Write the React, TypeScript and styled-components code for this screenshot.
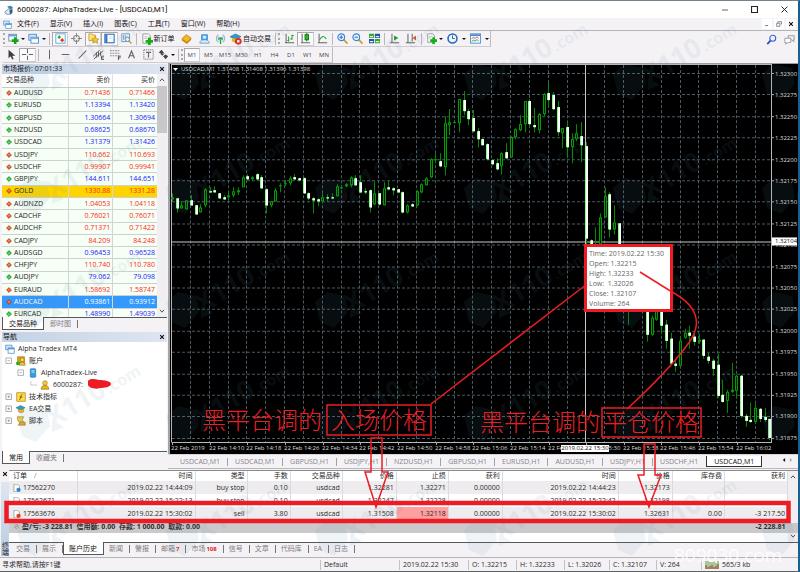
import React from "react";
import styled, { createGlobalStyle, css } from "styled-components";

const UI_FONT = `"Open Sans", "Noto Sans CJK SC", sans-serif`;
const RED = "#ed1c24";

const GlobalStyle = createGlobalStyle`
  *, *::before, *::after { box-sizing: border-box; }
  body { margin: 0; background: #f5f2f6; font-family: ${UI_FONT}; font-size: 7px; line-height: 12px; color: #2b2b2b; }
  button { appearance: none; border: 0; margin: 0; padding: 0; background: none; font: inherit; color: inherit; white-space: nowrap; }
  svg { display: block; flex: none; }
  table { border-collapse: collapse; }
`;

/* ---------- window frame ---------- */

const Window = styled.div`
  position: relative;
  display: flex;
  flex-direction: column;
  min-height: 100vh;
  overflow: hidden;
  border-top: 1px solid #74808c;
  border-right: 2px solid #17608f;
  border-bottom: 1px solid #5d6468;
`;

const TitleBar = styled.header`
  display: flex;
  align-items: center;
  gap: 3px;
  height: 17px;
  padding-left: 4px;
  background: #fff;
`;

const WindowTitle = styled.h1`
  flex: 1;
  margin: 0;
  font-family: Roboto, ${UI_FONT};
  font-size: 8px;
  font-weight: 400;
  color: #111;
`;

const CaptionButton = styled.button`
  display: grid;
  place-items: center;
  width: 27px;
  height: 17px;
`;

const MenuBar = styled.nav`
  display: flex;
  align-items: center;
  height: 13px;
  padding-left: 3px;
  border-bottom: 1px solid #b5b5b8;
`;

const MenuItem = styled.button`
  padding: 0 6px 0 5px;
  color: #111;
`;

const Spacer = styled.div`
  flex: 1;
`;

const ChildButton = styled.button`
  display: grid;
  place-items: center;
  width: 10px;
  height: 10px;
  margin-right: 2px;
  background: #fff;
`;

/* ---------- tool bars ---------- */

const ToolRow = styled.div`
  display: flex;
  align-items: center;
  height: 16px;
  padding-left: 3px;
`;

const ToolGroup = styled.div`
  display: flex;
  align-items: center;
  height: 16px;
  border-right: 1px solid #bdbac0;
  border-bottom: 1px solid #cfccd2;
`;

const ToolButton = styled.button<{ $w: number; $on?: boolean }>`
  display: flex;
  align-items: center;
  justify-content: center;
  width: ${(p) => p.$w}px;
  height: 14px;
  ${(p) =>
    p.$on &&
    css`
      background: #fbfafc;
      border: 1px solid #cfcdd2;
      border-top-color: #a9a7ac;
      border-left-color: #a9a7ac;
    `}
`;

const ToolLabel = styled.span`
  margin-left: 1px;
  color: #111;
`;

const Caret = styled.i`
  width: 0;
  height: 0;
  margin: 0 1px;
  border: 2px solid transparent;
  border-top-color: #111;
  border-bottom: 0;
`;

const Divider = styled.i`
  width: 1px;
  height: 12px;
  margin: 0 2px;
  background: #b9b6bc;
`;

const Handle = styled.i`
  width: 2px;
  height: 11px;
  margin-right: 1px;
  border-left: 2px dotted #aaa7ae;
`;

const Period = styled(ToolButton)`
  font-size: 6px;
  color: #444;
`;

/* ---------- work area ---------- */

const Work = styled.main`
  display: flex;
  height: 406px;
`;

const Side = styled.aside`
  display: flex;
  flex-direction: column;
  width: 168px;
  padding: 1px 1px 3px 2px;
`;

const PaneHeader = styled.div`
  display: flex;
  align-items: center;
  justify-content: space-between;
  height: 10px;
  padding: 0 2px 0 1px;
  background: linear-gradient(90deg, #c3d2e4, #dfe5f1);
  color: #111;
`;

const PaneClose = styled.button`
  display: grid;
  place-items: center;
  width: 7px;
  height: 8px;
`;

const QuoteBox = styled.div`
  display: flex;
  height: 243px;
  overflow: hidden;
  background: #fff;
`;

const QuoteTable = styled.table`
  flex: 1;
  height: 247px;
  table-layout: fixed;
  line-height: 8px;
  th, td { padding: 0 2px; text-align: right; font-weight: 400; border-right: 1px solid #d3d6d2; }
  th:first-child, td:first-child { padding-left: 4px; text-align: left; width: 66px; }
  th { height: 13px; background: #fff; border-right-color: #e2e2e2; border-bottom: 1px solid #c9c9c9; }
  th:last-child, td:last-child { border-right: 0; }
`;

const QuoteRow = styled.tr<{ $tone: string; $state?: string }>`
  background: ${(p) => (p.$state === "gold" ? "#ffd500" : p.$state === "selected" ? "#3399ff" : "#f6fff5")};
  border-bottom: 1px solid #cdd3cc;
  td { color: ${(p) => (p.$state === "selected" ? "#fff" : p.$tone === "up" ? "#1a1aff" : "#fb2a1a")}; }
  td:first-child { color: ${(p) => (p.$state === "selected" ? "#fff" : "#222")}; }
`;

const SymbolName = styled.span`
  display: flex;
  align-items: center;
  gap: 2px;
`;

const ScrollBar = styled.div`
  display: flex;
  flex-direction: column;
  align-items: center;
  justify-content: space-between;
  width: 10px;
  padding: 3px 0;
  background: #f1eff2;
`;

const Thumb = styled.i<{ $h: number }>`
  width: 100%;
  height: ${(p) => p.$h}px;
  margin-top: 3px;
  background: #c9c7ca;
`;

const PaneTabs = styled.div`
  display: flex;
  height: 15px;
  border-top: 1px solid #55575a;
`;

const PaneTab = styled.button<{ $on?: boolean }>`
  padding: 0 6px;
  line-height: 11px;
  color: ${(p) => (p.$on ? "#111" : "#7d7b80")};
  ${(p) =>
    p.$on
      ? css`
          height: 13px;
          margin-top: -1px;
          background: #fff;
          border: 1px solid #55575a;
          border-top: 0;
        `
      : css`
          height: 8px;
          margin-top: 2px;
          line-height: 8px;
          border-right: 1px solid #77757a;
        `}
`;

const TreeBox = styled.div`
  flex: 1;
  background: #fff;
`;

const Tree = styled.ul`
  display: grid;
  grid-auto-rows: 1fr;
  height: 83px;
  margin: 0;
  padding: 1px 0 0 3px;
  list-style: none;
`;

const TreeItem = styled.li<{ $depth: number }>`
  display: flex;
  align-items: center;
  gap: 3px;
  padding-left: ${(p) => p.$depth * 12}px;
`;

/* ---------- chart window ---------- */

const ChartPane = styled.section`
  display: flex;
  flex: 1;
  flex-direction: column;
  min-width: 0;
`;

const ChartFrame = styled.div`
  flex: 1;
  min-height: 0;
  background: #000;
  border-top: 1px solid #9c9ca0;
  border-left: 2px solid #a5a3a8;
  svg { width: 100%; height: 100%; }
`;

const ChartTabs = styled.div`
  display: flex;
  align-items: flex-start;
  height: 15px;
  padding: 1px 4px 0 5px;
  border-top: 1px solid #d8d5da;
  border-bottom: 1px solid #b9b7bb;
`;

const ChartTab = styled.button<{ $on?: boolean }>`
  flex: 0 1 auto;
  padding: 0 7px;
  line-height: 11px;
  color: ${(p) => (p.$on ? "#111" : "#86848a")};
  ${(p) =>
    p.$on
      ? css`
          height: 11px;
          line-height: 9px;
          background: #fff;
          border: 1px solid #333;
          border-top: 0;
        `
      : css`
          height: 8px;
          margin-top: 2px;
          line-height: 8px;
          border-right: 1px solid #a4a2a7;
          &:nth-last-of-type(4) { border-right-color: transparent; }
        `}
`;

/* ---------- terminal ---------- */

const Terminal = styled.section`
  display: flex;
  height: 88px;
`;

const TerminalRail = styled.div`
  display: flex;
  flex-direction: column;
  align-items: center;
  justify-content: space-between;
  width: 9px;
  padding: 1px 1px;
`;

const RailLabel = styled.span`
  flex: 1;
  width: 8px;
  margin-top: 4px;
  background: linear-gradient(#dfe6f2, #b9cbe0);
  writing-mode: vertical-rl;
  text-align: right;
  line-height: 8px;
`;

const TerminalBody = styled.div`
  display: flex;
  flex: 1;
  flex-direction: column;
  min-width: 0;
  border-top: 1px solid #8b8b8e;
  margin-top: 1px;
`;

const OrdersArea = styled.div`
  display: flex;
  flex: 1;
  background: #fff;
`;

const OrderScroll = styled.div`
  flex: 1;
  min-width: 0;
`;

const OrderTable = styled.table`
  width: 100%;
  height: 62px;
  table-layout: fixed;
  line-height: 10px;
  th, td { padding: 0 2px; text-align: right; font-weight: 400; white-space: nowrap; border-right: 1px solid #dcdadd; }
  th:first-child, td:first-child { padding-left: 4px; text-align: left; }
`;

const SortMark = styled.span`
  margin-left: 7px;
  color: #888;
`;

const OrderRow = styled.tr<{ $shade?: boolean }>`
  background: ${(p) => (p.$shade ? "#efecef" : "#fff")};
`;

const BalanceRow = styled.tr`
  background: #cbc9cb;
  td { border-right: 0; font-weight: 700; }
`;

const StopCell = styled.td<{ $hit?: boolean }>`
  background: ${(p) => (p.$hit ? "#ff9f9f" : "transparent")};
`;

const TerminalTabs = styled(PaneTabs)`
  padding-left: 2px;
`;

const TerminalTab = styled(PaneTab)`
  padding: 0 6px 0 5px;
  em { margin-left: 1px; font-size: 6px; font-style: normal; font-weight: 700; color: #e8202a; }
`;

const StatusBar = styled.footer`
  display: flex;
  align-items: center;
  flex: 1;
  min-height: 14px;
  border-top: 1px solid #b5b3b7;
`;

const StatusCell = styled.span<{ $w?: number }>`
  display: flex;
  align-items: center;
  gap: 3px;
  flex: ${(p) => (p.$w ? `0 0 ${p.$w}px` : "1")};
  height: 10px;
  padding-left: ${(p) => (p.$w ? 3 : 2)}px;
  border-left: ${(p) => (p.$w ? "1px solid #c4c1c6" : "0")};
`;

const Overlay = styled.svg`
  position: absolute;
  inset: -1px -2px -1px 0;
  width: calc(100% + 2px);
  height: calc(100% + 2px);
  pointer-events: none;
`;

/* ---------- icons ---------- */

const shapes: Record<string, React.ReactNode> = {
  app: (
    <>
      <path d="M4 2 9 1l3 3-4 2z" fill="#3c84ad" />
      <path d="M1 9 6 5l4 2-1 5H3z" fill="#dfe9ef" stroke="#356a88" strokeWidth=".8" />
      <path d="M7 7l4-2v5l-3 2z" fill="#2a5f80" />
    </>
  ),
  windows: (
    <>
      <rect x="1" y="1.5" width="8" height="6" fill="#d6e8fa" stroke="#4a8fd0" />
      <rect x="4" y="5" width="8" height="7" fill="#fff" stroke="#4a8fd0" />
      <path d="M4 6.2h8" stroke="#4a8fd0" strokeWidth="1.6" />
    </>
  ),
  newChart: (
    <>
      <rect x="1" y="1.5" width="9" height="8" fill="#f5fbff" stroke="#5a86b5" />
      <path d="M1 3h9" stroke="#6aa0d8" strokeWidth="2" />
      <path d="M8.500 5v8M4.500 9h8" stroke="#12a812" strokeWidth="3" />
    </>
  ),
  profiles: (
    <>
      <rect x="1" y="1.500" width="9" height="7" fill="#d3e7fb" stroke="#4387c7" />
      <rect x="3.500" y="5" width="9" height="7" fill="#fff" stroke="#4387c7" />
      <path d="M4 6.500h8" stroke="#6bb0f0" strokeWidth="1.500" />
    </>
  ),
  watch: (
    <>
      <rect x="1" y="1" width="11" height="11" fill="#fff" stroke="#4aa3df" />
      <path d="M3 5l2-2.500L7 5 5 7z" fill="#1cb01c" />
      <path d="M6 8.500 8.500 6 11 8.500 8.500 11z" fill="#e23b1d" />
    </>
  ),
  target: (
    <g fill="none" stroke="#888" strokeWidth="1.200">
      <circle cx="6.500" cy="6.500" r="3.500" />
      <path d="M6.500 0v5M6.500 8v5M0 6.500h5M8 6.500h5" />
    </g>
  ),
  favorites: (
    <>
      <path d="M1 1h4l1 1.500h3V9H1z" fill="#ffe27a" stroke="#b98a1b" strokeWidth=".8" />
      <path d="m8.500 4 1.300 2.700 3 .4-2.200 2 .6 3-2.700-1.500L5.900 12l.5-2.900-2.100-2 3-.4z" fill="#ffd21c" stroke="#a87c10" strokeWidth=".7" />
    </>
  ),
  panel: (
    <>
      <rect x="1" y="1.500" width="11" height="10" fill="#fff" stroke="#2f74ba" strokeWidth="1.300" />
      <path d="M1.500 2v9.500h2.500V2z" fill="#2f74ba" />
      <path d="M6 4.500h4M6 6.500h4" stroke="#b5cce4" strokeWidth=".7" />
    </>
  ),
  tester: (
    <>
      <rect x="1" y="1" width="9" height="9" fill="#eef5fc" stroke="#6c94bb" />
      <path d="M3 3v5M5 2v4M7 4v4" stroke="#6c94bb" />
      <circle cx="7.500" cy="7.500" r="2.600" fill="#e3f3ff" stroke="#6b8aa5" />
      <path d="m9.500 9.500 3 3" stroke="#c69a3a" strokeWidth="1.700" />
    </>
  ),
  order: (
    <>
      <path d="M2 1h6l2 2v8H2z" fill="#fff" stroke="#888" strokeWidth=".9" />
      <path d="M3.500 4h4M3.500 6h3" stroke="#999" strokeWidth=".7" />
      <path d="M9 5v8M5 9h8" stroke="#10b010" strokeWidth="3" />
    </>
  ),
  book: (
    <>
      <path d="m1 7 5-5 6 4-5 5z" fill="#f5b719" stroke="#a8720a" strokeWidth=".8" />
      <path d="M1 7v2l6 4 5-5V6l-5 5z" fill="#c98611" />
    </>
  ),
  person: (
    <>
      <path d="M3 2h7v6H3z" fill="#5bb4f5" stroke="#2b7cc0" strokeWidth=".8" />
      <path d="M5 3.500h3v3H5z" fill="#e6f5ff" />
      <path d="M1 12c0-3 2-4 5.500-4s5.500 1 5.500 4z" fill="#dcebf7" stroke="#3b86c3" strokeWidth=".8" />
    </>
  ),
  signal: (
    <g fill="none">
      <path d="M4 2a5.500 5.500 0 0 0 0 9M9 2a5.500 5.500 0 0 1 0 9" stroke="#9ab6cb" strokeWidth="1.400" />
      <path d="M5 4.500a3 3 0 0 0 0 4M8 4.500a3 3 0 0 1 0 4" stroke="#4aa0d0" strokeWidth="1.200" />
      <circle cx="6.500" cy="6.500" r="1.600" fill="#17b217" />
      <path d="M6.500 8v5" stroke="#17b217" strokeWidth="1.600" />
    </g>
  ),
  expert: (
    <>
      <path d="m0 4 6-3 6 3-6 3z" fill="#2e9ad2" stroke="#1b648f" strokeWidth=".6" />
      <path d="M2 6h8v3c-2 2-6 2-8 0z" fill="#e8b423" />
      <circle cx="9" cy="9" r="3.600" fill="#e22c1f" />
      <path d="M7.700 7.700h2.600v2.600H7.700z" fill="#fff" />
    </>
  ),
  hat: (
    <>
      <path d="m0 5 6-3 6 3-6 3z" fill="#2e9ad2" stroke="#1b648f" strokeWidth=".6" />
      <path d="M3 7h7v3c-2 2-5 2-7 0z" fill="#e8b423" stroke="#977110" strokeWidth=".6" />
    </>
  ),
  bars: (
    <g fill="none" strokeWidth="1.200">
      <path d="M2.500 1v11M1 11.500h11" stroke="#666" />
      <path d="M5.500 4v6M9.500 2v6M9.500 3h2M7.500 7h2M5.500 9h-1.500" stroke="#1aa01a" />
    </g>
  ),
  candles: (
    <g strokeWidth="1.200">
      <path d="M2.500 1v11M1 11.500h11" stroke="#666" />
      <path d="M8 0v10" stroke="#137a13" />
      <rect x="6" y="2" width="4" height="6" fill="#1ec31e" stroke="#137a13" />
    </g>
  ),
  line: (
    <g fill="none" strokeWidth="1.200">
      <path d="M2.500 1v11M1 11.500h11" stroke="#666" />
      <path d="M3 8c3-5 5-5 8-1" stroke="#1aa01a" />
    </g>
  ),
  zoomIn: (
    <>
      <path d="m8 8 4.500 4.500" stroke="#d3a22d" strokeWidth="2.200" />
      <circle cx="5" cy="5" r="4" fill="#dff1ff" stroke="#3d85cf" strokeWidth="1.300" />
      <path d="M5 3v4M3 5h4" stroke="#2b6fb8" strokeWidth="1.200" />
    </>
  ),
  zoomOut: (
    <>
      <path d="m8 8 4.500 4.500" stroke="#d3a22d" strokeWidth="2.200" />
      <circle cx="5" cy="5" r="4" fill="#dff1ff" stroke="#3d85cf" strokeWidth="1.300" />
      <path d="M3 5h4" stroke="#2b6fb8" strokeWidth="1.200" />
    </>
  ),
  tile: (
    <>
      <path d="M0 1h6v5H0zM7 7h6v5H7z" fill="#2fa82f" />
      <path d="M7 1h6v5H7zM0 7h6v5H0z" fill="#2354b0" />
      <path d="M1 3.500h4V5H1zM8 3.500h4V5H8zM1 9.500h4V11H1zM8 9.500h4V11H8z" fill="#e4f2e4" />
    </>
  ),
  scroll: (
    <>
      <path d="M3.500 1v11M1 11.500h11" stroke="#666" strokeWidth="1.200" />
      <path d="m6 3 5 3-5 3z" fill="#18a018" />
    </>
  ),
  shift: (
    <>
      <path d="M3.500 1v11M1 11.500h11M8.500 1v9" stroke="#666" strokeWidth="1.200" />
      <path d="m13 3-4 3 4 3z" fill="#d2562a" />
    </>
  ),
  clock: (
    <>
      <circle cx="6.500" cy="6.500" r="5.300" fill="#eaf5ff" stroke="#1f68c4" strokeWidth="1.800" />
      <path d="M6.500 3v3.500H9" stroke="#345" fill="none" />
    </>
  ),
  template: (
    <>
      <rect x=".500" y="1" width="12" height="11" fill="#eef6ff" stroke="#4b88c6" />
      <path d="M1 2.500h11" stroke="#4b88c6" strokeWidth="2" />
      <path d="m2 7 2-2 2 1.500 2-2 2 1.500" stroke="#bb5838" fill="none" />
      <path d="m2 10 2-1.500 2 1 2-1.500 2 1" stroke="#2b9b3b" fill="none" />
    </>
  ),
  cursor: <path d="M3 1v10l2.500-2.300L7.300 12.500l1.700-.8-1.700-3.600H11z" fill="#3a3a3a" />,
  cross: <path d="M6.500 0v5M6.500 8v5M0 6.500h5M8 6.500h5" stroke="#666" strokeWidth="1.200" />,
  vline: <path d="M6.500 1v11" stroke="#666" strokeWidth="1.200" />,
  hline: <path d="M2 6.500h9" stroke="#666" strokeWidth="1.200" />,
  trend: <path d="M2 11 11 2" stroke="#666" strokeWidth="1.200" />,
  channel: (
    <g stroke="#444" fill="none">
      <path d="M0 9 8 1M1 12 12 2M4 4v6M6.500 3v6M9 3v5" />
      <path d="M13 8.500h-3v4h3M10 10.500h2.500" />
    </g>
  ),
  fibo: (
    <g stroke="#777" fill="none">
      <path d="M0 2h12M0 5h12M0 8h12" strokeDasharray="2 1" />
      <path d="M13 8.500h-3V13M10 10.500h2.500" stroke="#444" />
    </g>
  ),
  letter: <path d="M3 11 6.500 2.500 10 11M4.500 8h4" stroke="#666" strokeWidth="1.400" fill="none" />,
  label: (
    <g stroke="#666" fill="none">
      <rect x="1" y="1" width="11" height="11" strokeDasharray="1.500 1" />
      <path d="M3.500 4h6M6.500 4v6" strokeWidth="1.400" />
    </g>
  ),
  arrows: <path d="M1 4 4 1l3 3-3 2zM6 8.500l3-2 3 2-3 3.500zM3 6l2 2 3-3" fill="#444" />,
  search: (
    <>
      <path d="M5.500 7.500 1.500 12" stroke="#2450c8" strokeWidth="2" />
      <circle cx="8" cy="5" r="3.500" fill="#eef4ff" stroke="#3a63d6" strokeWidth="1.300" />
    </>
  ),
  chat: (
    <g stroke="#88868c" strokeWidth=".9">
      <path d="M5 2h7v5h-1l1 2-3-2H5z" fill="#eee" />
      <path d="M1 5h7v5H5l-3 2 .5-2H1z" fill="#fff" />
    </g>
  ),
  accounts: (
    <>
      <path d="M2 1h9v10H2z" fill="#d7a419" stroke="#8c670b" strokeWidth=".7" />
      <circle cx="8" cy="5" r="2.500" fill="#f7dc6a" stroke="#8c670b" strokeWidth=".7" />
      <path d="M4 12c0-3 1.500-4 4-4s4 1 4 4z" fill="#f0c12b" stroke="#8c670b" strokeWidth=".7" />
      <circle cx="2.500" cy="9.500" r="2.500" fill="#20b020" />
    </>
  ),
  server: (
    <>
      <rect x="3" y="1" width="7" height="11" rx="1" fill="#2e9fe0" stroke="#17679c" strokeWidth=".8" />
      <path d="M4.500 3.500h4M4.500 5.500h4" stroke="#e8f7ff" />
    </>
  ),
  user: (
    <>
      <circle cx="6.500" cy="4" r="3" fill="#f7cf3d" stroke="#9a7008" strokeWidth=".8" />
      <path d="M1.500 12c0-3.500 2-5 5-5s5 1.500 5 5z" fill="#e7b21c" stroke="#9a7008" strokeWidth=".8" />
    </>
  ),
  indicator: (
    <>
      <rect x="1" y="1" width="11" height="11" fill="#ffdb4d" stroke="#b98c16" />
      <path d="M8.500 3.500C6 3 6.500 6 6 8s-1 2-2 1.800M4.500 6.500h4" stroke="#6b4e05" fill="none" />
    </>
  ),
  script: (
    <>
      <path d="M2 1h8l-2 4 2 3H4L2 5z" fill="#f3cf55" stroke="#a37b14" strokeWidth=".8" />
      <path d="M5 8h7v4H3z" fill="#dcae27" stroke="#a37b14" strokeWidth=".8" />
    </>
  ),
  minus: <path d="M1.500 1.500h9v9h-9zM4 6h4" fill="#fff" stroke="#888" />,
  plus: <path d="M1.500 1.500h9v9h-9zM4 6h4M6 4v4" fill="#fff" stroke="#777" />,
  elbow: <path d="M3 0v6.500h10" fill="none" stroke="#aaa" />,
  doc: (
    <>
      <path d="M1.500.500h6l3 3v9h-9z" fill="#fff" stroke="#7d8185" />
      <circle cx="9" cy="9.500" r="3.500" fill="#2c87d6" />
    </>
  ),
  docSell: (
    <>
      <path d="M1.500.500h6l3 3v9h-9z" fill="#fff" stroke="#7d8185" />
      <circle cx="9" cy="9.500" r="3.500" fill="#e2401d" />
    </>
  ),
  down: (
    <>
      <path d="M6.500 1 12 6.500 6.500 12 1 6.500z" fill="#e4552a" stroke="#9c2c0c" />
      <path d="M4.500 5h4L6.500 8z" fill="#ffb59b" />
    </>
  ),
  upTick: (
    <>
      <path d="M6.500 1 12 6.500 6.500 12 1 6.500z" fill="#2fb53a" stroke="#0f7a1c" />
      <path d="M4.500 8h4L6.500 5z" fill="#a8efae" />
    </>
  ),
  zero: <path d="M6.500 3a3.500 3.500 0 1 0 .01 0M4 9l5-5" fill="none" stroke="#777" />,
  close: <path d="m2.500 2.500 8 8m0-8-8 8" stroke="#111" strokeWidth="2.400" />,
  chevronUp: <path d="m2 9 4.500-5L11 9" fill="none" stroke="#444" strokeWidth="2" />,
  chevronDown: <path d="m2 4 4.500 5L11 4" fill="none" stroke="#444" strokeWidth="2" />,
  left: <path d="M9 2v9L4 6.500z" fill="#111" />,
  right: <path d="M4 2v9l5-4.500z" fill="#aaa" />,
  min: <path d="M0 6.500h13" stroke="#222" strokeWidth="1.500" />,
  max: <path d="M1 1h11v11H1z" fill="none" stroke="#222" strokeWidth="2" />,
  exit: <path d="m1 1 11 11m0-11L1 12" stroke="#222" strokeWidth="1.800" />,
  childMin: <path d="M2 10h7" stroke="#678" strokeWidth="2" />,
  childMax: <path d="M4 1.500h8v6M1.500 5h7v6.500h-7zM4 1.500V4" fill="none" stroke="#678" strokeWidth="1.800" />,
};

function Icon({ name, size = 11 }: { name: string; size?: number }) {
  return (
    <svg width={size} height={size} viewBox="0 0 13 13" aria-hidden="true">
      {shapes[name]}
    </svg>
  );
}

function Tool({ icon, w = 16, on }: { icon: string; w?: number; on?: boolean }) {
  return (
    <ToolButton $w={w} $on={on} aria-label={icon}>
      <Icon name={icon} />
    </ToolButton>
  );
}

/* ---------- data ---------- */

const menus = ["文件(F)", "显示(V)", "插入(I)", "图表(C)", "工具(T)", "窗口(W)", "帮助(H)"];

const quotes: [string, string, string, "up" | "down", string?][] = [
  ["AUDUSD", "0.71436", "0.71466", "down"],
  ["EURUSD", "1.13394", "1.13420", "up"],
  ["GBPUSD", "1.30664", "1.30694", "up"],
  ["NZDUSD", "0.68625", "0.68670", "up"],
  ["USDCAD", "1.31379", "1.31426", "up"],
  ["USDJPY", "110.662", "110.693", "down"],
  ["USDCHF", "0.99907", "0.99941", "down"],
  ["GBPJPY", "144.611", "144.651", "up"],
  ["GOLD", "1330.88", "1331.28", "down", "gold"],
  ["AUDNZD", "1.04053", "1.04118", "down"],
  ["CADCHF", "0.76021", "0.76071", "down"],
  ["AUDCHF", "0.71371", "0.71422", "down"],
  ["CADJPY", "84.209", "84.248", "down"],
  ["AUDSGD", "0.96453", "0.96528", "up"],
  ["CHFJPY", "110.740", "110.780", "down"],
  ["AUDJPY", "79.062", "79.098", "up"],
  ["EURAUD", "1.58692", "1.58747", "down"],
  ["AUDCAD", "0.93861", "0.93912", "down", "selected"],
  ["EURCAD", "1.48990", "1.49039", "up"],
];

const chartTabs = [
  "USDCAD,M1", "USDCAD,M1", "GBPUSD,H1", "USDJPY,H1", "NZDUSD,H1", "GBPUSD,H1",
  "EURUSD,H1", "AUDUSD,H1", "USDJPY,H1", "USDCHF,H1", "USDCAD,M1",
];

const orderHeads = ["订单", "时间", "类型", "手数", "交易品种", "价格", "止损", "获利", "时间", "价格", "库存费", "获利"];
const orderWidths = [68, 118, 52, 43, 52, 54, 52, 54, 116, 54, 52, 63];
const orders = [
  ["17562270", "2019.02.22 14:44:09", "buy stop", "0.10", "usdcad", "1.32281", "1.32271", "0.00000", "2019.02.22 14:44:23", "1.32173", "", ""],
  ["17562671", "2019.02.22 15:22:13", "buy stop", "0.10", "usdcad", "1.32247", "1.32228", "0.00000", "2019.02.22 15:22:42", "1.32198", "", ""],
  ["17563676", "2019.02.22 15:30:02", "sell", "3.80", "usdcad", "1.31508", "1.32118", "0.00000", "2019.02.22 15:30:02", "1.32631", "0.00", "-3 217.50"],
];

const terminalTabs: [string, string?][] = [
  ["交易"], ["展示"], ["账户历史"], ["新闻"], ["警报"], ["邮箱", "7"], ["市场", "108"],
  ["信号"], ["文章"], ["代码库"], ["EA"], ["日志"],
];

const treeRows: [number, string | null, string, string][] = [
  [0, null, "windows", "Alpha Tradex MT4"],
  [0, "minus", "accounts", "账户"],
  [1, "minus", "server", "AlphaTradex-Live"],
  [2, "elbow", "user", "6000287:"],
  [0, "plus", "indicator", "技术指标"],
  [0, "plus", "hat", "EA交易"],
  [0, "plus", "script", "脚本"],
];

// high, body top, body bottom, low, kind (w: falling, g: rising); thirds of a pixel below the plot origin
type Candle = [number, number, number, number, "w" | "g"] | null;
const candles: Candle[] = [
  [400,412,418,424,"g"],[415,415,443,457,"w"],[423,435,445,445,"g"],[420,420,446,447,"g"],[405,420,434,434,"w"],
  [434,434,461,461,"w"],[432,440,455,455,"g"],[385,388,436,440,"g"],[382,392,395,398,"w"],[378,389,395,395,"w"],
  [400,400,413,413,"w"],[405,412,416,416,"w"],[392,406,411,420,"g"],[380,394,405,412,"g"],[380,390,396,405,"g"],
  [345,350,380,382,"g"],[343,349,357,357,"w"],[348,350,356,360,"g"],[338,342,356,360,"w"],[346,350,383,383,"w"],
  [385,387,435,460,"w"],[423,424,436,440,"g"],[385,390,422,422,"g"],[370,374,378,395,"g"],[360,370,373,378,"g"],
  [348,353,370,374,"g"],[342,350,358,358,"w"],[355,355,359,362,"w"],[350,353,398,400,"w"],[395,400,415,420,"w"],
  [410,413,420,460,"w"],[415,418,424,437,"w"],[400,410,424,430,"g"],[403,410,415,424,"w"],[400,411,414,416,"w"],
  [372,378,408,408,"g"],[375,380,384,386,"g"],[368,373,379,382,"g"],[348,350,374,382,"g"],[345,353,374,374,"w"],
  [344,366,395,398,"w"],[385,392,395,402,"w"],[388,390,440,456,"w"],[362,400,432,435,"g"],[398,400,432,435,"w"],
  [365,384,434,436,"g"],[362,381,388,390,"w"],[382,384,390,405,"w"],[386,388,395,398,"w"],[392,395,457,460,"w"],
  [432,436,455,460,"g"],[430,433,439,441,"w"],[390,394,436,438,"g"],[370,373,395,400,"g"],[350,355,374,376,"g"],
  [295,297,352,354,"g"],[278,296,298,305,"g"],[280,302,318,320,"w"],[168,190,322,346,"g"],[148,187,195,225,"g"],
  [180,185,188,190,"g"],[118,118,188,215,"g"],[92,120,152,165,"w"],[148,152,177,195,"w"],[150,175,213,215,"w"],
  [205,213,237,260,"w"],[235,238,254,255,"w"],[250,252,298,300,"w"],[298,300,313,315,"w"],[295,308,326,330,"w"],
  [275,280,317,342,"g"],[250,275,293,297,"w"],[228,230,290,292,"g"],[205,208,232,236,"g"],[165,193,210,214,"g"],
  [124,124,192,215,"g"],[118,123,193,195,"w"],[145,195,200,215,"w"],[160,163,210,218,"g"],[100,102,163,168,"g"],
  [68,99,119,138,"w"],[95,104,147,150,"w"],[124,142,215,228,"w"],[203,205,220,265,"g"],[185,202,262,290,"w"],
  [218,237,260,310,"g"],[193,220,238,242,"g"],[187,228,255,305,"w"],[245,258,535,555,"w"],[537,540,560,570,"w"],
  [500,552,570,580,"g"],[460,472,552,560,"g"],[382,407,470,470,"g"],[395,402,506,530,"w"],[435,485,508,522,"g"],
  [488,488,620,640,"w"],[600,620,700,720,"w"],[690,700,740,792,"g"],null,null,
  null,[740,745,822,842,"w"],[765,770,822,824,"g"],[720,725,777,780,"g"],[740,745,795,818,"w"],
  [778,792,840,865,"w"],[815,834,908,910,"w"],[895,910,914,932,"w"],[828,840,914,916,"g"],[805,817,832,835,"g"],
  [795,817,824,865,"w"],[810,827,844,855,"w"],[818,837,842,848,"g"],[836,838,885,895,"w"],[875,888,900,910,"w"],
  [895,900,925,945,"w"],[880,912,1006,1010,"w"],[958,1002,1023,1027,"w"],[988,994,1020,1055,"g"],[905,988,992,995,"g"],
  [942,944,990,1010,"g"],[942,945,1065,1070,"w"],[1060,1064,1080,1098,"w"],[1025,1078,1082,1085,"w"],[1030,1040,1082,1085,"g"],
  [1040,1045,1075,1082,"w"],[1040,1068,1076,1082,"w"],[1073,1073,1132,1136,"w"],
];

const timeLabels = [
  "22 Feb 2019", "22 Feb 14:10", "22 Feb 14:18", "22 Feb 14:26", "22 Feb 14:34", "22 Feb 14:42", "22 Feb 14:50",
  "22 Feb 14:58", "22 Feb 15:06", "22 Feb 15:14", "22 Feb 15:22", "22 Feb 15:30", "22 Feb 15:38", "22 Feb 15:46",
  "22 Feb 15:54", "22 Feb 16:02",
];

function PriceChart() {
  const y = (v: number) => 60 + v / 3;
  const vLines = Array.from({ length: 31 }, (_, i) => Math.round(190 + 18.83 * i) + 0.5);
  const hLines = Array.from({ length: 18 }, (_, i) => Math.round(73 + 21.4 * i) + 0.5);
  return (
    <svg viewBox="170 64 628 389" preserveAspectRatio="none" role="img" aria-label="USDCAD,M1">
      <rect x="170" y="64" width="628" height="389" fill="#000" />
      <g stroke="#4a5a66" strokeDasharray="3 2">
        {vLines.map((x) => <path key={x} d={`M${x} 65V441`} />)}
        {hLines.map((v) => <path key={v} d={`M172 ${v}H771`} />)}
      </g>
      <path d="M171.500 441V64.500H771.500V441.500H171.500" fill="none" stroke="#b9b9b9" />
      <path d="M585.500 65V441M171 241.500H771" stroke="#c8c8c8" />
      {candles.map((c, i) => {
        if (!c) return null;
        const x = Math.round(172 + 4.703 * i);
        const top = Math.round(y(c[1]));
        const h = Math.max(1, Math.round(y(c[2])) - top);
        const falling = c[4] === "w";
        return (
          <g key={i}>
            <path d={`M${x + 0.5} ${Math.round(y(c[0]))}V${Math.round(y(c[3]))}`} stroke="#008c00" />
            <rect x={x - 1} y={top} width="3" height={h} fill={falling ? "#7dff7d" : "#009e00"} />
            {falling ? (
              <rect x={x} y={top} width="2" height={h} fill="#fff" />
            ) : (
              <rect x={x} y={top + 1} width="1" height={Math.max(0, h - 2)} fill="#001a00" />
            )}
          </g>
        );
      })}
      <g fill="#dcdcdc" fontFamily={UI_FONT} fontSize="6">
        <path d="M173 68h5l-2.500 3z" fill="#fff" />
        <text x="181" y="71">USDCAD,M1</text>
        <text x="217" y="71">1.31408 1.31408 1.31396 1.31398</text>
        {hLines.map((v, i) => (
          <g key={v}>
            <path d={`M771 ${v}h3`} stroke="#aaa" />
            <text x="775" y={v + 2}>{(1.323 - i * 0.00025).toFixed(5)}</text>
          </g>
        ))}
        {timeLabels.map((t, i) => (
          <g key={t}>
            <path d={`M${Math.round(172 + 37.65 * i) + 0.5} 441v3`} stroke="#aaa" />
            <text x={Math.round(171 + 37.65 * i)} y="449">{t}</text>
          </g>
        ))}
      </g>
      <rect x="772" y="237" width="25" height="8" fill="#fff" />
      <rect x="561" y="444" width="48" height="7" fill="#fff" />
      <g fill="#111" fontFamily={UI_FONT} fontSize="6">
        <text x="775" y="243">1.32104</text>
        <text x="585" y="449" textAnchor="middle">2019.02.22 15:30</text>
      </g>
    </svg>
  );
}

function Annotations() {
  const info = ["Time: 2019.02.22 15:30", "Open: 1.32215", "High: 1.32233", "Low:  1.32026", "Close: 1.32107", "Volume: 264"];
  return (
    <Overlay viewBox="0 0 800 572" preserveAspectRatio="none" aria-hidden="true">
      <rect x="585.500" y="245.500" width="86" height="65" fill="#fff" stroke={RED} strokeWidth="3" />
      <g fontFamily={UI_FONT} fontSize="7" fill="#666">
        {info.map((t, i) => <text key={t} x="589" y={256 + i * 10} xmlSpace="preserve">{t}</text>)}
      </g>
      <g fill="none" stroke={RED} strokeWidth="1.500">
        <rect x="327" y="405" width="104" height="30" />
        <rect x="602" y="408" width="99" height="29" />
        <path d="M431 404 587 284" />
        <path d="M640 272 672 292C698 306 703 324 688 344 672 366 652 386 627 409" />
        <path d="M371 438h11v34h6l-12 35-11-35h6z" />
        <path d="M644 444h11v31h6l-12 32-11-32h6z" />
      </g>
      <g fill={RED} fontFamily={`"Noto Sans CJK SC", sans-serif`} fontSize="24" fontWeight="300">
        <text x="202" y="429">黑平台调的</text>
        <text x="331" y="429">入场价格</text>
        <text x="480" y="431">黑平台调的</text>
        <text x="603" y="431">平仓价格</text>
      </g>
      <rect x="6.500" y="503" width="782" height="18" fill="none" stroke={RED} strokeWidth="4.500" />
      <path d="M88 381c2-3 7-2 11-1 5 0 12 1 12 4s-7 4-11 4c-5 2-12-1-12-3z" fill={RED} />
    </Overlay>
  );
}

function Watermark() {
  return (
    <Overlay viewBox="0 0 800 572" preserveAspectRatio="none" aria-hidden="true">
      <g fill="#5d8ba3" fontFamily={UI_FONT} fontWeight="700">
        {[0, 1, 2, 3, 4].flatMap((r) =>
          [0, 1, 2, 3, 4, 5].map((c) => (
            <g key={`${r}-${c}`} opacity=".09" transform={`translate(${34 + c * 149} ${82 + r * 114})`}>
              <path d="m-17-8 12-10 18 4 3 16-14 16-14-6z" />
              <path d="m18-4 12 7-12 5z" />
              {c < 5 && (
                <g transform="rotate(-31)">
                  <text x="14" y="13" fontSize="27">X110</text>
                  <text x="80" y="13" fontSize="16">.com</text>
                </g>
              )}
            </g>
          )),
        )}
      </g>
      <text x="674" y="562" fontFamily={UI_FONT} fontSize="19" fill="#fff" opacity=".85">809030.com</text>
    </Overlay>
  );
}

export default function App() {
  return (
    <>
      <GlobalStyle />
      <Window>
        <TitleBar>
          <Icon name="app" size={10} />
          <WindowTitle>6000287: AlphaTradex-Live - [USDCAD,M1]</WindowTitle>
          <CaptionButton aria-label="minimize"><Icon name="min" size={6} /></CaptionButton>
          <CaptionButton aria-label="maximize"><Icon name="max" size={7} /></CaptionButton>
          <CaptionButton aria-label="close"><Icon name="exit" size={7} /></CaptionButton>
        </TitleBar>
        <MenuBar>
          <Icon name="windows" size={9} />
          {menus.map((m) => <MenuItem key={m}>{m}</MenuItem>)}
          <Spacer />
          <ChildButton aria-label="minimize chart"><Icon name="childMin" size={6} /></ChildButton>
          <ChildButton aria-label="restore chart"><Icon name="childMax" size={6} /></ChildButton>
          <ChildButton aria-label="close chart"><Icon name="close" size={6} /></ChildButton>
        </MenuBar>
        <ToolRow>
          <ToolGroup>
            <Handle />
            <Tool icon="newChart" w={14} /><Caret />
            <Tool icon="profiles" w={15} /><Caret />
            <Divider />
            <Tool icon="watch" on />
            <Tool icon="target" w={17} />
            <Tool icon="favorites" on />
            <Tool icon="panel" w={17} on />
            <Tool icon="tester" />
            <Divider />
            <ToolButton $w={37}><Icon name="order" size={12} /><ToolLabel>新订单</ToolLabel></ToolButton>
            <Tool icon="book" w={20} />
            <Tool icon="person" />
            <Tool icon="signal" />
            <ToolButton $w={45}><Icon name="expert" size={12} /><ToolLabel>自动交易</ToolLabel></ToolButton>
            <Divider />
            <Handle />
            <Tool icon="bars" />
            <Tool icon="candles" w={17} on />
            <Tool icon="line" />
            <Divider />
            <Tool icon="zoomIn" w={14} />
            <Tool icon="zoomOut" w={17} />
            <Tool icon="tile" />
            <Divider />
            <Tool icon="scroll" w={15} />
            <Tool icon="shift" w={17} />
            <Divider />
            <Tool icon="order" w={14} /><Caret />
            <Tool icon="clock" w={17} /><Caret />
            <Tool icon="template" w={17} /><Caret />
          </ToolGroup>
          <Spacer />
          <Tool icon="search" w={18} />
          <Tool icon="chat" w={18} />
        </ToolRow>
        <ToolRow>
          <ToolGroup>
            <Tool icon="cursor" />
            <Tool icon="cross" w={17} on />
            <Divider />
            {["vline", "hline", "trend", "channel", "fibo", "letter", "label"].map((n, i) => (
              <Tool key={n} icon={n} w={i % 2 ? 17 : 16} />
            ))}
            <Tool icon="arrows" w={14} /><Caret />
            <Divider />
            <Handle />
            {["M1", "M5", "M15", "M30", "H1", "H4", "D1", "W1", "MN"].map((p, i) => (
              <Period key={p} $w={i % 2 ? 17 : 16} $on={i === 0}>{p}</Period>
            ))}
          </ToolGroup>
        </ToolRow>
        <Work>
          <Side>
            <PaneHeader>
              市场报价: 07:01:33
              <PaneClose aria-label="close"><Icon name="close" size={6} /></PaneClose>
            </PaneHeader>
            <QuoteBox>
              <QuoteTable>
                <thead>
                  <tr><th>交易品种</th><th>卖价</th><th>买价</th></tr>
                </thead>
                <tbody>
                  {quotes.map(([s, bid, ask, tone, state]) => (
                    <QuoteRow key={s} $tone={tone} $state={state}>
                      <td><SymbolName><Icon name={tone === "up" ? "upTick" : "down"} size={6} />{s}</SymbolName></td>
                      <td>{bid}</td>
                      <td>{ask}</td>
                    </QuoteRow>
                  ))}
                </tbody>
              </QuoteTable>
              <ScrollBar>
                <Icon name="chevronUp" size={6} />
                <Thumb $h={47} />
                <Spacer />
                <Icon name="chevronDown" size={6} />
              </ScrollBar>
            </QuoteBox>
            <PaneTabs>
              <PaneTab $on>交易品种</PaneTab>
              <PaneTab>即时图</PaneTab>
            </PaneTabs>
            <PaneHeader>
              导航
              <PaneClose aria-label="close"><Icon name="close" size={6} /></PaneClose>
            </PaneHeader>
            <TreeBox>
              <Tree>
                {treeRows.map(([depth, toggle, icon, label]) => (
                  <TreeItem key={label} $depth={depth}>
                    {toggle && <Icon name={toggle} size={8} />}
                    <Icon name={icon} size={10} />
                    {label}
                  </TreeItem>
                ))}
              </Tree>
            </TreeBox>
            <PaneTabs>
              <PaneTab $on>常用</PaneTab>
              <PaneTab>收藏夹</PaneTab>
            </PaneTabs>
          </Side>
          <ChartPane>
            <ChartFrame><PriceChart /></ChartFrame>
            <ChartTabs>
              {chartTabs.map((t, i) => <ChartTab key={i} $on={i === chartTabs.length - 1}>{t}</ChartTab>)}
              <Spacer />
              <PaneClose aria-label="previous"><Icon name="left" size={6} /></PaneClose>
              <PaneClose aria-label="next"><Icon name="right" size={6} /></PaneClose>
            </ChartTabs>
          </ChartPane>
        </Work>
        <Terminal>
          <TerminalRail>
            <PaneClose aria-label="close terminal"><Icon name="close" size={6} /></PaneClose>
            <RailLabel>终端</RailLabel>
          </TerminalRail>
          <TerminalBody>
            <OrdersArea>
              <OrderScroll>
                <OrderTable>
                  <colgroup>{orderWidths.map((w, i) => <col key={i} width={w} />)}</colgroup>
                  <thead>
                    <tr>{orderHeads.map((h, i) => <th key={i}>{h}{i === 0 && <SortMark>/</SortMark>}</th>)}</tr>
                  </thead>
                  <tbody>
                    {orders.map((o, r) => (
                      <OrderRow key={o[0]} $shade={r !== 1}>
                        {o.map((v, i) =>
                          i === 6 ? (
                            <StopCell key={i} $hit={r === 2}>{v}</StopCell>
                          ) : (
                            <td key={i}>
                              {i === 0 ? <SymbolName><Icon name={r === 2 ? "docSell" : "doc"} size={8} />{v}</SymbolName> : v}
                            </td>
                          ),
                        )}
                      </OrderRow>
                    ))}
                    <BalanceRow>
                      <td colSpan={11}>
                        <SymbolName><Icon name="zero" size={7} />盈/亏: -3 228.81&nbsp; 信用额: 0.00&nbsp; 存款: 1 000.00&nbsp; 取款: 0.00</SymbolName>
                      </td>
                      <td>-2 228.81</td>
                    </BalanceRow>
                  </tbody>
                </OrderTable>
              </OrderScroll>
              <ScrollBar>
                <Icon name="chevronUp" size={6} />
                <Spacer />
                <Thumb $h={10} />
                <Icon name="chevronDown" size={6} />
              </ScrollBar>
            </OrdersArea>
            <TerminalTabs>
              {terminalTabs.map(([t, n]) => (
                <TerminalTab key={t} $on={t === "账户历史"}>{t}{n && <em>{n}</em>}</TerminalTab>
              ))}
            </TerminalTabs>
          </TerminalBody>
        </Terminal>
        <StatusBar>
          <StatusCell>寻求帮助,请按F1键</StatusCell>
          <StatusCell $w={79}>Default</StatusCell>
          <StatusCell $w={69}>2019.02.22 15:30</StatusCell>
          <StatusCell $w={48}>O: 1.32215</StatusCell>
          <StatusCell $w={48}>H: 1.32233</StatusCell>
          <StatusCell $w={45}>L: 1.32026</StatusCell>
          <StatusCell $w={47}>C: 1.32107</StatusCell>
          <StatusCell $w={45}>V: 264</StatusCell>
          <StatusCell $w={97}>
            <svg width="14" height="8" viewBox="0 0 14 8" aria-hidden="true">
              <path d="M1 0v8M3 0v8M5 1v7M7 1v7M9 0v8M11 2v6M13 0v8" stroke="#5e9a3a" />
              <path d="M1 4v4M3 6v2M5 5v3M7 4v4M9 6v2M11 5v3M13 3v5" stroke="#a13526" />
            </svg>
            565/3 kb
          </StatusCell>
        </StatusBar>
        <Watermark />
        <Annotations />
      </Window>
    </>
  );
}
